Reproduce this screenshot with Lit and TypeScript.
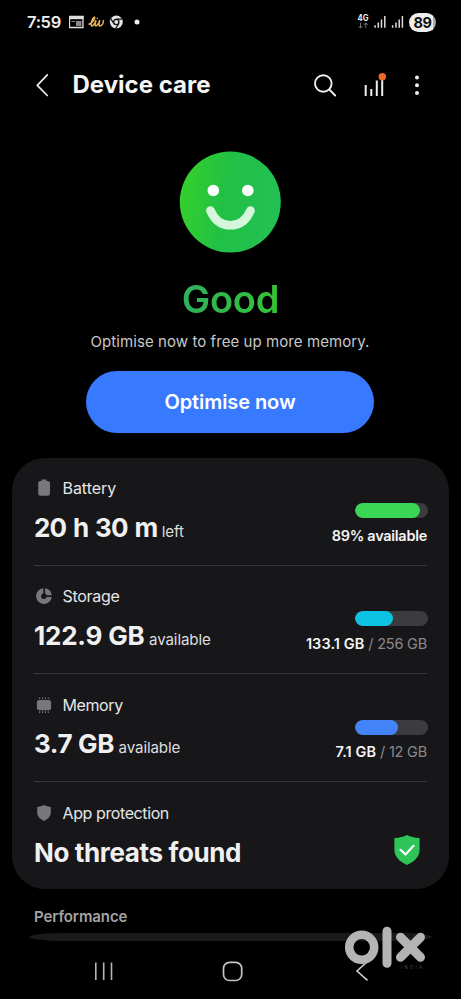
import { LitElement, html, svg, css, nothing } from "lit";
import { customElement, property } from "lit/decorators.js";
import { styleMap } from "lit/directives/style-map.js";

type Metric = {
  kind: string;
  label: string;
  value: string;
  unit?: string;
  fill?: number;
  color?: string;
  used?: string;
  total?: string;
};

const metrics: Metric[] = [
  { kind: "battery", label: "Battery", value: "20 h 30 m", unit: "left", fill: 89, color: "#3bd654", used: "89% available" },
  { kind: "storage", label: "Storage", value: "122.9 GB", unit: "available", fill: 52, color: "#0dc3e2", used: "133.1 GB", total: "256 GB" },
  { kind: "memory", label: "Memory", value: "3.7 GB", unit: "available", fill: 59, color: "#4484fa", used: "7.1 GB", total: "12 GB" },
  { kind: "shield", label: "App protection", value: "No threats found" },
];

const glyphs: Record<string, unknown> = {
  battery: svg`<path d="M7.6 1.6h4.8v1.5h1.4a2.2 2.2 0 0 1 2.2 2.2v10.3a2.2 2.2 0 0 1-2.2 2.2H6.4a2.2 2.2 0 0 1-2.2-2.2V5.3a2.2 2.2 0 0 1 2.2-2.2h1.2z" />`,
  storage: svg`<path fill-rule="evenodd" d="M9.4 2.2A7.9 7.9 0 1 0 17.8 11h-5.1a2.9 2.9 0 1 1-3.3-3.7z" /><path d="M11.1 2.3a7.9 7.9 0 0 1 6.7 6.9h-5.1a3 3 0 0 0-1.6-1.8z" />`,
  memory: svg`<rect x="2.9" y="5" width="14.2" height="10.2" rx="2.2" /><path d="M5.6 2.4v1.7M8.5 2.4v1.7M11.4 2.4v1.7M14.3 2.4v1.7M5.6 16.2v1.7M8.5 16.2v1.7M11.4 16.2v1.7M14.3 16.2v1.7" stroke="#77777c" stroke-width="1.1" />`,
  shield: svg`<path d="M10 1.9c2 1 4.300 1.700 6.800 2v5.700c0 3.800-2.800 6.700-6.800 8.300-4-1.600-6.800-4.500-6.800-8.300V3.900c2.500-.3 4.800-1 6.800-2z" />`,
};

@customElement("metric-row")
class MetricRow extends LitElement {
  @property({ attribute: false }) metric!: Metric;

  static styles = css`
    :host { display: flex; justify-content: space-between; height: 108.3px; box-sizing: border-box; }
    :host(:not(:last-of-type)) { border-bottom: 1.5px solid #37373a; }
    .main { padding-top: 19.7px; display: flex; flex-direction: column; gap: 12.5px; }
    .label { display: flex; align-items: center; height: 22px; font-size: 16px; color: #e6e6e8; letter-spacing: -0.2px; white-space: nowrap; }
    .battery-name { letter-spacing: -0.05px; }
    .memory-name, .shield-name { letter-spacing: -0.4px; }
    .storage-name { letter-spacing: -0.3px; }
    .glyph { width: 20px; height: 20px; margin-right: 8.5px; fill: #77777c; }
    .value { line-height: 32px; font-size: 26px; font-weight: 700; color: #f0f0f0; white-space: nowrap; letter-spacing: -0.37px; }
    .battery-value { letter-spacing: -0.9px; word-spacing: 1.6px; }
    .storage-value { letter-spacing: -0.2px; }
    .unit { font-size: 15.1px; font-weight: 400; color: #dededf; letter-spacing: -0.1px; margin-left: 4.5px; }
    .side { padding-top: 45.7px; display: flex; flex-direction: column; align-items: flex-end; gap: 8.6px; }
    .track { width: 72.5px; height: 15px; margin-right: -0.5px; border-radius: 8px; background: #3c3c40; overflow: hidden; }
    .fill { height: 100%; border-radius: 8px; }
    .amount { line-height: 18px; font-size: 14.5px; color: #8a8a8d; white-space: nowrap; letter-spacing: -0.2px; }
    .used { font-weight: 600; color: #f4f4f4; letter-spacing: -0.28px; }
    .partial { letter-spacing: 0.08px; }
    .safe { width: 28px; height: 32px; margin: 52px 6.5px 0 0; }
    .shield { padding-top: 0; }
  `;

  render() {
    const m = this.metric;
    return html`
      <div class="main">
        <div class="label"><svg class="glyph" viewBox="0 0 20 20">${glyphs[m.kind]}</svg><span class="name ${m.kind}-name">${m.label}</span></div>
        <div class="value ${m.kind}-value">${m.value}${m.unit ? html`<span class="unit">${m.unit}</span>` : nothing}</div>
      </div>
      ${m.fill
        ? html`<div class="side">
            <div class="track"><div class="fill" style=${styleMap({ width: `${m.fill}%`, background: m.color! })}></div></div>
            <div class="amount"><span class="used ${m.total ? "partial" : ""}">${m.used}</span>${m.total ? html` / ${m.total}` : nothing}</div>
          </div>`
        : html`<div class="side shield"><svg class="safe" viewBox="0 0 28 32">
            <path d="M14 1c3.500 1.900 7.300 2.600 12.600 3v11.500c0 7-4.800 12-12.600 15.500C6.200 27.500 1.400 22.500 1.400 15.500V4C6.700 3.600 10.500 2.900 14 1z" fill="#2fc457" />
            <path d="M7.500 15.800l5 4.600 8-8.600" fill="none" stroke="#fff" stroke-width="2.200" stroke-linecap="round" stroke-linejoin="round" />
          </svg></div>`}
    `;
  }
}

@customElement("app-root")
class AppRoot extends LitElement {
  static styles = css`
    :host { display: flex; flex-direction: column; position: relative; width: 461px; height: 999px; overflow: hidden; background: #000; color: #fff; font-family: Inter, "Liberation Sans", sans-serif; }
    .status { height: 44px; display: flex; align-items: center; padding: 0 25px 0 27px; box-sizing: border-box; flex: none; }
    .time { font-size: 16.5px; font-weight: 600; color: #eee; width: 42px; letter-spacing: -0.3px; }
    .notices { width: 75px; height: 20px; }
    .radio { margin-left: auto; width: 49px; height: 22px; }
    .charge { width: 27px; height: 19px; border-radius: 10px; background: linear-gradient(90deg, #eee 89%, #aaa 89%); color: #111; font-size: 14.5px; line-height: 19px; font-weight: 700; text-align: center; margin-left: 3px; letter-spacing: -0.5px; }
    .bar { height: 81px; display: flex; align-items: center; box-sizing: border-box; padding: 0 36px 0 34px; flex: none; }
    .back { width: 17px; height: 26px; margin-right: 21.5px; }
    .title { font-size: 24px; font-weight: 700; color: #f5f5f5; margin: 0; letter-spacing: 0; white-space: nowrap; }
    .actions { margin-left: auto; width: 114px; height: 30px; }
    .hero { display: flex; flex-direction: column; align-items: center; width: 460px; padding-top: 26px; height: 332.5px; box-sizing: border-box; flex: none; }
    .face { width: 102px; height: 102px; }
    .grade { margin-top: 23px; line-height: 46px; font-size: 38px; font-weight: 560; letter-spacing: -0.2px; padding-left: 1px; background: linear-gradient(90deg, #2fb05c, #34c334); background-clip: text; -webkit-background-clip: text; color: transparent; }
    .hint { margin-top: 8px; line-height: 24px; font-size: 15px; letter-spacing: 0.07px; color: #c8c8c8; white-space: nowrap; }
    .optimise { margin-top: 17px; width: 288px; height: 62px; flex: none; border: 0; border-radius: 31px; background: #3779ff; color: #fff; font: 600 20px Inter, sans-serif; letter-spacing: -0.08px; padding: 0; }
    .card { margin: 0 12px; padding: 0 22px; height: 431.5px; border-radius: 33px; background: #17171a; box-sizing: border-box; flex: none; }
    .section { margin: 17px 34px 0; line-height: 22px; font-size: 15px; font-weight: 600; letter-spacing: -0.08px; color: #a3a3a3; flex: none; }
    .peek { margin: 5px 29px 0; height: 8px; border-radius: 36px / 4px; background: #1a1a1b; flex: none; }
    .nav { flex: 1; display: flex; }
    .keys { width: 461px; height: 58px; }
    .mark { position: absolute; left: 340px; top: 922px; width: 90px; height: 50px; }
  `;

  render() {
    return html`
      <div class="status">
        <div class="time">7:59</div>
        <svg class="notices" viewBox="69 12 75 20">
          <path d="M69.500 16.500h13.500v11h-13.500z" fill="none" stroke="#ddd" stroke-width="1.300" />
          <path d="M69 16h14.500v3.200H69z" fill="#ddd" />
          <path d="M71.500 21.500h3.500" stroke="#888" stroke-width="1" />
          <path d="M76 21h5.500v5H76z" fill="#888" />
          <path d="M89 24.300c3.500-1.500 6.300-5.300 5.600-7.400-1.800.1-3.700 5.600-3.400 8.200.3 1.900 2.500 1.200 4.700-4.300-1.200 3.600-1 5.100 0 5.100 1.300 0 2.700-2.700 3.700-5.100-1 3.500-.8 5.200.5 5.100 2-.2 3.200-3.100 3.300-5.200" fill="none" stroke="#e9b755" stroke-width="1.500" stroke-linecap="round" stroke-linejoin="round" />
          <circle cx="97.300" cy="18.200" r=".8" fill="#e9b755" />
          <circle cx="116.300" cy="22" r="6.500" fill="#e4e4e4" />
          <circle cx="116.300" cy="22" r="2.600" fill="#e4e4e4" stroke="#111" stroke-width="1.300" />
          <path d="M116.300 19.100h6M113.600 23.300l-3.200-5.200M118.700 23.700l-3.200 5.200" stroke="#111" stroke-width="1.200" />
          <circle cx="137" cy="22" r="2.500" fill="#eee" />
        </svg>
        <svg class="radio" viewBox="357 11 49 22">
          <text x="357.500" y="21" font-size="8.300" font-weight="700" fill="#eee" textLength="11" lengthAdjust="spacingAndGlyphs">4G</text>
          <path d="M360.500 22.800v5.300m-1.900-2l1.900 2 1.900-2M365.800 28.200v-5.300m-1.900 2l1.900-2 1.900 2" fill="none" stroke="#777" stroke-width="1" />
          <path d="M375.100 25.300v2.400M378.300 22.500v5.200M381.500 19.500v8.200M384.800 16v11.700M392.600 25.300v2.400M396 22.500v5.200M399.200 19.500v8.200M402.400 16v11.700" stroke="#ddd" stroke-width="1.500" />
        </svg>
        <div class="charge">89</div>
      </div>
      <div class="bar">
        <svg class="back" viewBox="34 71 17 26"><path d="M47.300 73.800L37.300 84.300l10 10.200" fill="none" stroke="#eee" stroke-width="1.700" stroke-linecap="round" stroke-linejoin="round" /></svg>
        <h1 class="title">Device care</h1>
        <svg class="actions" viewBox="311 69 114 30">
          <circle cx="323.300" cy="82.500" r="8.300" fill="none" stroke="#eee" stroke-width="1.900" />
          <path d="M329.300 88.500l5.900 6" stroke="#eee" stroke-width="1.900" stroke-linecap="round" />
          <path d="M365.700 84v11M371.300 88v7M376.800 79.500V95M382.200 78v17" stroke="#eee" stroke-width="2" />
          <circle cx="382.300" cy="75.800" r="3.700" fill="#ee6b2c" />
          <circle cx="417" cy="76.500" r="2" fill="#eee" /><circle cx="417" cy="84.200" r="2" fill="#eee" /><circle cx="417" cy="91.900" r="2" fill="#eee" />
        </svg>
      </div>
      <div class="hero">
        <svg class="face" viewBox="0 0 102 102">
          <defs><linearGradient id="g" x1="0" x2="1" y1=".4" y2=".55"><stop offset="0" stop-color="#35d02c" /><stop offset=".45" stop-color="#21c045" /><stop offset="1" stop-color="#22c154" /></linearGradient></defs>
          <circle cx="51.300" cy="51" r="50.500" fill="url(#g)" />
          <circle cx="34.300" cy="39.500" r="5.800" fill="#fff" /><circle cx="68.800" cy="39.500" r="5.800" fill="#fff" />
          <path d="M31.400 59.500C35.400 69 42.300 74.300 51.400 74.300S67.500 69 71.500 59.500" fill="none" stroke="#d5f6da" stroke-width="8.600" stroke-linecap="round" />
        </svg>
        <div class="grade">Good</div>
        <div class="hint">Optimise now to free up more memory.</div>
        <button class="optimise">Optimise now</button>
      </div>
      <div class="card">${metrics.map((m) => html`<metric-row .metric=${m}></metric-row>`)}</div>
      <div class="section">Performance</div>
      <div class="peek"></div>
      <div class="nav">
        <svg class="keys" viewBox="0 941 461 58">
          <path d="M95.800 962.500v17.500M103.700 962.500v17.500M111.500 962.500v17.500" stroke="#b5b5b5" stroke-width="1.600" />
          <rect x="223.500" y="962.300" width="18.200" height="18.200" rx="6" fill="none" stroke="#c4c4c4" stroke-width="1.700" />
          <path d="M367.500 961.500L357 971l10.500 9.300" fill="none" stroke="#cfcfcf" stroke-width="1.600" />
        </svg>
      </div>
      <svg class="mark" viewBox="340 922 90 50">
        <circle cx="361.700" cy="947.300" r="12.500" fill="none" stroke="#b4b4b4" stroke-width="8.500" />
        <path d="M387 931.300v32" stroke="#b4b4b4" stroke-width="9" stroke-linecap="round" />
        <path d="M400.500 937.300l20 20M420.500 937.300l-20 20" stroke="#b4b4b4" stroke-width="9" stroke-linecap="round" />
        <text x="401" y="968.500" font-size="4.500" fill="#4c4c4c" textLength="21">INDIA</text>
      </svg>
    `;
  }
}
